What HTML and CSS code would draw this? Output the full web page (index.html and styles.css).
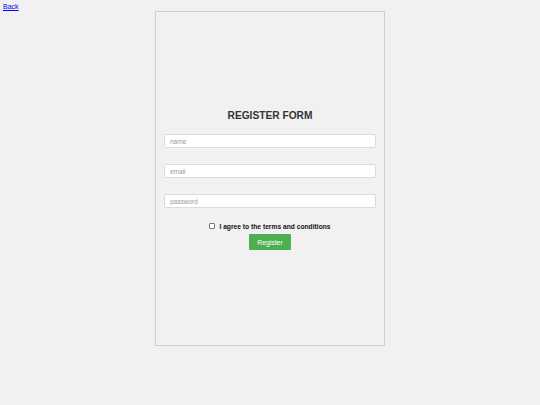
FILE: index.html
```html
<!DOCTYPE html>
<html>
<head>
<meta charset="utf-8">
<link rel="stylesheet" href="styles.css">
</head>
<body>
<div class="top"><a href="#" class="back">Back</a></div>
<div class="card">
  <h2 class="title">REGISTER FORM</h2>
  <input class="field" type="text" placeholder="name">
  <input class="field" type="text" placeholder="email">
  <input class="field" type="password" placeholder="password">
  <label class="agree"><input type="checkbox" class="check"><span>I agree to the terms and conditions</span></label>
  <button class="btn">Register</button>
</div>
</body>
</html>
```
FILE: styles.css
```css
html, body {
  margin: 0;
  padding: 0;
  background: #f1f1f1;
  font-family: "Liberation Sans", Arial, sans-serif;
}
.top {
  padding: 3px 0 0 3px;
  height: 8px;
  font-size: 7px;
  line-height: 8px;
}
.back {
  font-size: 7px;
  color: #0000ee;
  text-decoration: underline;
}
.card {
  box-sizing: border-box;
  width: 230px;
  height: 335px;
  margin: 0 auto;
  border: 1px solid #cfcfcf;
  background: #f1f1f1;
  padding: 98px 8px 0;
  display: flex;
  flex-direction: column;
  align-items: center;
}
.title {
  margin: 0 0 12px;
  font-size: 10.2px;
  line-height: 12px;
  font-weight: bold;
  color: #333;
}
.field {
  box-sizing: border-box;
  width: 212px;
  height: 14px;
  margin: 0 0 16px;
  padding: 0 5px;
  border: 1px solid #dcdcdc;
  border-radius: 2px;
  background: #fff;
  font-family: "Liberation Sans", Arial, sans-serif;
  font-size: 6.5px;
  color: #333;
  outline: none;
}
.field:nth-of-type(3) {
  margin-bottom: 15px;
}
.field::placeholder {
  color: #9a9a9a;
}
.agree {
  display: flex;
  align-items: center;
  margin-top: -1px;
  height: 8px;
  font-size: 6.7px;
  font-weight: bold;
  color: #111;
}
.check {
  appearance: none;
  -webkit-appearance: none;
  box-sizing: border-box;
  width: 6px;
  height: 6px;
  margin: 0 4px 0 0;
  border: 1px solid #777;
  border-radius: 1px;
  background: #fff;
}
.btn {
  margin-top: 4px;
  width: 42px;
  height: 16px;
  padding: 0;
  border: none;
  border-radius: 1px;
  background: #4caf50;
  color: #fff;
  font-family: "Liberation Sans", Arial, sans-serif;
  font-size: 6.8px;
}
```
